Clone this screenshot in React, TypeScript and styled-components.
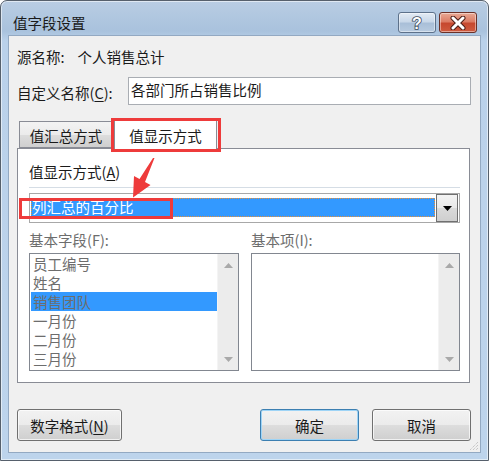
import React from 'react';
import styled, { createGlobalStyle } from 'styled-components';

const GlobalStyle = createGlobalStyle`
    * { box-sizing: border-box; }
    body {
        margin: 0;
        background: #ffffff;
        font-family: "Noto Sans CJK SC", "Noto Sans", sans-serif;
        font-size: 14.5px;
        color: #1a1a1a;
    }
`;

const red = '#ee3b3b';

const Window = styled.div`
    position: relative;
    width: 489px;
    height: 461px;
    display: flex;
    flex-direction: column;
    padding: 0 8px 8px;
    border: 1px solid #56606c;
    border-radius: 7px 7px 0 0;
    background: linear-gradient(180deg, #b9cde3 0px, #a9c2dd 30px, #bad1ea 40px, #bdd4ec 100%);
    box-shadow: inset 0 0 0 1px rgba(255, 255, 255, 0.55);
    overflow: hidden;
`;

const TitleBar = styled.div`
    height: 35px;
    flex: 0 0 35px;
    display: flex;
    align-items: flex-start;
`;

const Title = styled.div`
    margin: 12px 0 0 4px;
    line-height: 20px;
    flex: 1;
`;

const CaptionButtons = styled.div`
    display: flex;
    gap: 3px;
    margin: 11px 3px 0 0;
`;

const CaptionButton = styled.div<{ $close?: boolean }>`
    width: 38px;
    height: 21px;
    border-radius: 3px;
    display: flex;
    align-items: center;
    justify-content: center;
    border: 1px solid ${p => (p.$close ? '#6b3128' : '#5d718a')};
    background: ${p =>
        p.$close
            ? 'linear-gradient(180deg, #e9a995 0%, #dc7d66 45%, #c6482f 55%, #cf5b3f 100%)'
            : 'linear-gradient(180deg, #e3ebf4 0%, #c9d8e9 45%, #a9bfd8 55%, #b8cbe0 100%)'};
    box-shadow: inset 0 0 0 1px rgba(255, 255, 255, 0.45);
`;

const Client = styled.div`
    flex: 1;
    position: relative;
    display: flex;
    flex-direction: column;
    background: #f0f0f0;
    box-shadow: 0 0 0 1px #93a9c2;
`;

const SourceRow = styled.div`
    margin: 11px 0 0 8px;
    line-height: 20px;
    display: flex;
    gap: 13px;
`;

const NameRow = styled.div`
    margin: 10px 0 0 8px;
    height: 28px;
    display: flex;
    align-items: center;
`;

const NameLabel = styled.div`
    flex: 0 0 111px;
    padding-top: 2px;
`;

const NameInput = styled.div`
    width: 343px;
    height: 28px;
    border: 1px solid #a9adb3;
    background: #ffffff;
    padding-left: 2px;
    line-height: 24px;
`;

const TabRow = styled.div`
    margin: 14px 0 0 10px;
    height: 29px;
    display: flex;
    align-items: flex-end;
    position: relative;
    z-index: 1;
`;

const Tab = styled.div<{ $active?: boolean; $width: number }>`
    width: ${p => p.$width}px;
    height: ${p => (p.$active ? 30 : 27)}px;
    margin-bottom: ${p => (p.$active ? -1 : 0)}px;
    margin-left: ${p => (p.$active ? 1 : 0)}px;
    display: flex;
    align-items: center;
    justify-content: center;
    padding-top: 2px;
    border: 1px solid #898c95;
    border-bottom: ${p => (p.$active ? 'none' : '1px solid #898c95')};
    background: ${p => (p.$active ? '#ffffff' : 'linear-gradient(180deg, #f3f3f3 0%, #ebebeb 50%, #dddddd 51%, #cfcfcf 100%)')};
`;

const Panel = styled.div`
    margin-left: 8px;
    width: 453px;
    height: 235px;
    border: 1px solid #898c95;
    background: #ffffff;
    padding: 13px 9px 0 11px;
    display: flex;
    flex-direction: column;
`;

const Label = styled.div<{ $disabled?: boolean }>`
    line-height: 20px;
    color: ${p => (p.$disabled ? '#6d6d6d' : '#1a1a1a')};
`;

const Separator = styled.div`
    margin-top: 5px;
    height: 1px;
    background: #d5dde5;
`;

const Combo = styled.div`
    margin-top: 5px;
    height: 30px;
    display: flex;
    align-items: center;
    border: 1px solid #a8a8a8;
    padding: 0 1px 0 1px;
`;

const ComboValue = styled.div`
    flex: 1;
    height: 19px;
    margin-top: -1px;
    background: #3399ff;
    color: #ffffff;
    line-height: 18px;
    padding-left: 1px;
    outline: 1px dotted #e8913a;
    outline-offset: -1px;
`;

const ComboButton = styled.div`
    width: 22px;
    align-self: stretch;
    margin-left: 1px;
    border: 1px solid #707070;
    background: linear-gradient(180deg, #f4f4f4 0%, #e8e8e8 50%, #dadada 51%, #cfcfcf 100%);
    display: flex;
    align-items: center;
    justify-content: center;
`;

const Columns = styled.div`
    display: grid;
    grid-template-columns: 210px 209px;
    column-gap: 12px;
    margin-top: 7px;
`;

const ListBox = styled.div`
    margin-top: 3px;
    height: 118px;
    border: 1px solid #828790;
    display: flex;
`;

const Items = styled.div`
    flex: 1;
    padding-top: 0;
`;

const Item = styled.div<{ $selected?: boolean }>`
    height: 19px;
    line-height: 19px;
    margin-left: 1px;
    padding-left: 2px;
    color: #6d6d6d;
    background: ${p => (p.$selected ? '#3399ff' : 'transparent')};
`;

const ScrollBar = styled.div`
    width: 21px;
    background: #ececec;
    border-left: 1px solid #f4f4f4;
    display: flex;
    flex-direction: column;
    justify-content: space-between;
    align-items: center;
    padding: 9px 0 8px;
`;

const ButtonRow = styled.div`
    margin: 26px 9px 0 8px;
    display: flex;
    gap: 13px;
`;

const Spacer = styled.div`
    flex: 1;
`;

const Button = styled.div<{ $width: number; $default?: boolean }>`
    width: ${p => p.$width}px;
    height: 32px;
    display: flex;
    align-items: center;
    justify-content: center;
    border-radius: 3px;
    border: 1px solid ${p => (p.$default ? '#3c7fb1' : '#707070')};
    background: linear-gradient(180deg, #f2f2f2 0%, #ebebeb 50%, #dddddd 51%, #cfcfcf 100%);
    box-shadow: inset 0 0 0 1px ${p => (p.$default ? '#9ed4f6' : 'rgba(255,255,255,0.7)')};
`;

const Key = styled.span`
    text-decoration: underline;
    text-underline-offset: 2px;
`;

const RedBox = styled.div<{ $x: number; $y: number; $w: number; $h: number }>`
    position: absolute;
    left: ${p => p.$x}px;
    top: ${p => p.$y}px;
    width: ${p => p.$w}px;
    height: ${p => p.$h}px;
    border: 3px solid ${red};
    pointer-events: none;
    z-index: 5;
`;

const Overlay = styled.svg`
    position: absolute;
    left: 0;
    top: 0;
    pointer-events: none;
    z-index: 6;
`;

const Grip = styled.svg`
    position: absolute;
    right: 1px;
    bottom: 1px;
`;

const ScrollArrow: React.FC<{ up?: boolean }> = ({ up }) => (
    <svg width="9" height="5" viewBox="0 0 9 5">
        <polygon points={up ? '4.5,0 9,5 0,5' : '0,0 9,0 4.5,5'} fill="#a9a9a9" />
    </svg>
);

const fields = ['员工编号', '姓名', '销售团队', '一月份', '二月份', '三月份'];

const App: React.FC = () => {
    return (
        <>
            <GlobalStyle />
            <Window>
                <TitleBar>
                    <Title>值字段设置</Title>
                    <CaptionButtons>
                        <CaptionButton>
                            <svg width="14" height="16" viewBox="0 0 14 16">
                                <text
                                    x="7"
                                    y="14"
                                    textAnchor="middle"
                                    fontFamily="Liberation Sans, sans-serif"
                                    fontWeight="bold"
                                    fontSize="16"
                                    fill="#ffffff"
                                    stroke="#3d4c5e"
                                    strokeWidth="1.6"
                                    paintOrder="stroke"
                                >
                                    ?
                                </text>
                            </svg>
                        </CaptionButton>
                        <CaptionButton $close>
                            <svg width="16" height="14" viewBox="0 0 16 14">
                                <path d="M3 2 L13 12 M13 2 L3 12" stroke="#4a1d16" strokeWidth="5" strokeLinecap="round" />
                                <path d="M3 2 L13 12 M13 2 L3 12" stroke="#ffffff" strokeWidth="3" strokeLinecap="round" />
                            </svg>
                        </CaptionButton>
                    </CaptionButtons>
                </TitleBar>
                <Client>
                    <SourceRow>
                        <span>源名称:</span>
                        <span>个人销售总计</span>
                    </SourceRow>
                    <NameRow>
                        <NameLabel>
                            自定义名称(<Key>C</Key>):
                        </NameLabel>
                        <NameInput>各部门所占销售比例</NameInput>
                    </NameRow>
                    <TabRow>
                        <Tab $width={94}>值汇总方式</Tab>
                        <Tab $active $width={103}>值显示方式</Tab>
                    </TabRow>
                    <Panel>
                        <Label>
                            值显示方式(<Key>A</Key>)
                        </Label>
                        <Separator />
                        <Combo>
                            <ComboValue>列汇总的百分比</ComboValue>
                            <ComboButton>
                                <svg width="9" height="5" viewBox="0 0 9 5">
                                    <polygon points="0,0 9,0 4.5,5" fill="#000000" />
                                </svg>
                            </ComboButton>
                        </Combo>
                        <Columns>
                            <Label $disabled>基本字段(F):</Label>
                            <Label $disabled>基本项(I):</Label>
                            <ListBox>
                                <Items>
                                    {fields.map((f, i) => (
                                        <Item key={f} $selected={i === 2}>
                                            {f}
                                        </Item>
                                    ))}
                                </Items>
                                <ScrollBar>
                                    <ScrollArrow up />
                                    <ScrollArrow />
                                </ScrollBar>
                            </ListBox>
                            <ListBox>
                                <Items />
                                <ScrollBar>
                                    <ScrollArrow up />
                                    <ScrollArrow />
                                </ScrollBar>
                            </ListBox>
                        </Columns>
                    </Panel>
                    <ButtonRow>
                        <Button $width={105}>
                            数字格式(<Key>N</Key>)
                        </Button>
                        <Spacer />
                        <Button $width={99} $default>
                            确定
                        </Button>
                        <Button $width={99}>取消</Button>
                    </ButtonRow>
                    <Grip width="11" height="11" viewBox="0 0 11 11">
                        <path d="M10 2 L2 10 M10 5 L5 10 M10 8 L8 10" stroke="#b4b4b4" strokeWidth="1" strokeDasharray="1 1" />
                    </Grip>
                </Client>
                <RedBox $x={110} $y={117} $w={110} $h={34} />
                <RedBox $x={18} $y={197} $w={154} $h={21} />
                <Overlay width="489" height="461" viewBox="0 0 489 461">
                    <polygon
                        points="153.5,157 144,181 149.5,184 132,196.5 133,175 138.5,178 152,157"
                        fill={red}
                    />
                </Overlay>
            </Window>
        </>
    );
};

export default App;
